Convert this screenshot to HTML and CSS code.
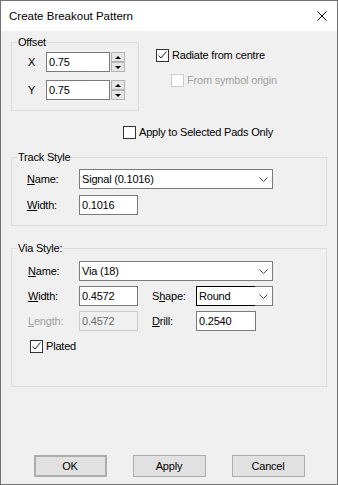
FILE: index.html
```html
<!DOCTYPE html>
<html>
<head>
    <title>Create Breakout Pattern</title>
    <link rel="stylesheet" href="styles.css">
</head>
<body>
<div class="window">
    <div class="titlebar">
        <span class="title">Create Breakout Pattern</span>
        <svg class="close" width="10" height="10" viewBox="0 0 10 10"><path d="M0.5 0.5L9.5 9.5M9.5 0.5L0.5 9.5" stroke="#000" stroke-width="1"/></svg>
    </div>
    <div class="content">
        <div class="top-row">
            <fieldset class="group offset">
                <legend>Offset</legend>
                <div class="group-body">
                    <div class="spin-row">
                        <span class="axis">X</span>
                        <span class="edit spin-edit">0.75</span>
                        <span class="spinner"><span class="spin-btn"><i class="tri-up"></i></span><span class="spin-btn"><i class="tri-down"></i></span></span>
                    </div>
                    <div class="spin-row second">
                        <span class="axis">Y</span>
                        <span class="edit spin-edit">0.75</span>
                        <span class="spinner"><span class="spin-btn"><i class="tri-up"></i></span><span class="spin-btn"><i class="tri-down"></i></span></span>
                    </div>
                </div>
            </fieldset>
            <div class="options">
                <div class="check">
                    <span class="box"><svg width="11" height="11" viewBox="0 0 11 11"><polyline points="1.5,5.5 4,8 9.5,1.5" fill="none" stroke="#222" stroke-width="1"/></svg></span>
                    <span>Radiate from centre</span>
                </div>
                <div class="check disabled sub">
                    <span class="box"></span>
                    <span>From symbol origin</span>
                </div>
            </div>
        </div>

        <div class="check apply">
            <span class="box"></span>
            <span>Apply to Selected Pads Only</span>
        </div>

        <fieldset class="group track">
            <legend>Track Style</legend>
            <div class="group-body">
                <div class="row">
                    <span class="lbl"><u>N</u>ame:</span>
                    <div class="combo wide">
                        <span class="combo-text">Signal (0.1016)</span>
                        <span class="combo-arrow"><svg width="9" height="5" viewBox="0 0 9 5"><polyline points="0.5,0.5 4.5,4.5 8.5,0.5" fill="none" stroke="#444" stroke-width="1"/></svg></span>
                    </div>
                </div>
                <div class="row next">
                    <span class="lbl"><u>W</u>idth:</span>
                    <span class="edit short">0.1016</span>
                </div>
            </div>
        </fieldset>

        <fieldset class="group via">
            <legend>Via Style:</legend>
            <div class="group-body">
                <div class="via-grid">
                    <span class="lbl"><u>N</u>ame:</span>
                    <div class="combo span4">
                        <span class="combo-text">Via (18)</span>
                        <span class="combo-arrow"><svg width="9" height="5" viewBox="0 0 9 5"><polyline points="0.5,0.5 4.5,4.5 8.5,0.5" fill="none" stroke="#444" stroke-width="1"/></svg></span>
                    </div>

                    <span class="lbl"><u>W</u>idth:</span>
                    <span class="edit">0.4572</span>
                    <span></span>
                    <span class="lbl">S<u>h</u>ape:</span>
                    <div class="combo focus">
                        <span class="combo-text">Round</span>
                        <span class="combo-arrow"><svg width="9" height="5" viewBox="0 0 9 5"><polyline points="0.5,0.5 4.5,4.5 8.5,0.5" fill="none" stroke="#444" stroke-width="1"/></svg></span>
                    </div>

                    <span class="lbl disabled-text"><u>L</u>ength:</span>
                    <span class="edit disabled-edit">0.4572</span>
                    <span></span>
                    <span class="lbl"><u>D</u>rill:</span>
                    <span class="edit drill">0.2540</span>
                </div>
                <div class="check plated">
                    <span class="box"><svg width="11" height="11" viewBox="0 0 11 11"><polyline points="1.5,5.5 4,8 9.5,1.5" fill="none" stroke="#222" stroke-width="1"/></svg></span>
                    <span>Plated</span>
                </div>
            </div>
        </fieldset>

        <div class="buttons">
            <button class="default">OK</button>
            <button>Apply</button>
            <button>Cancel</button>
        </div>
    </div>
</div>
</body>
</html>
```

FILE: styles.css
```css
body {
    margin: 0;
    font-family: "Liberation Sans", Arial, sans-serif;
    font-size: 11px;
    color: #000;
}
.window {
    width: 338px;
    height: 485px;
    box-sizing: border-box;
    border: 1px solid #727272;
    background-color: #f0f0f0;
    display: flex;
    flex-direction: column;
}
.titlebar {
    height: 30px;
    background-color: #fff;
    display: flex;
    align-items: center;
    justify-content: space-between;
    padding: 0 10px 0 8px;
}
.title {
    font-size: 11.5px;
}
.content {
    padding: 4px 10px 0 10px;
    letter-spacing: -0.2px;
}
.top-row {
    display: flex;
}
.group {
    margin: 0;
    padding: 0;
    border: 1px solid #dcdcdc;
    min-width: 0;
    box-sizing: border-box;
}
.group legend {
    margin-left: 5px;
    padding: 0 1px;
    height: 14px;
    line-height: 14px;
}
.offset {
    width: 128px;
}
.offset .group-body {
    padding: 3px 0 10px 16px;
}
.spin-row {
    display: flex;
    align-items: center;
    height: 20px;
}
.spin-row.second {
    margin-top: 8px;
}
.axis {
    width: 18px;
}
.edit {
    display: block;
    box-sizing: border-box;
    height: 20px;
    line-height: 18px;
    border: 1px solid #7a7a7a;
    background-color: #fff;
    padding-left: 2px;
    width: 59px;
}
.spin-edit {
    width: 64px;
}
.spinner {
    margin-left: 1px;
    width: 14px;
    height: 20px;
    display: flex;
    flex-direction: column;
    justify-content: space-between;
}
.spin-btn {
    height: 10px;
    box-sizing: border-box;
    border: 1px solid #b4b4b4;
    background-color: #e6e6e6;
    display: flex;
    align-items: center;
    justify-content: center;
}
.tri-up {
    border-left: 3px solid transparent;
    border-right: 3px solid transparent;
    border-bottom: 3px solid #000;
}
.tri-down {
    border-left: 3px solid transparent;
    border-right: 3px solid transparent;
    border-top: 3px solid #000;
}
.options {
    margin-left: 17px;
    margin-top: 14px;
}
.check {
    display: flex;
    align-items: center;
    height: 13px;
    line-height: 13px;
}
.box {
    width: 13px;
    height: 13px;
    box-sizing: border-box;
    border: 1px solid #333;
    background-color: #fff;
    margin-right: 3px;
    display: flex;
    align-items: center;
    justify-content: center;
}
.check.sub {
    margin-top: 12px;
    margin-left: 15px;
}
.check.disabled {
    color: #a0a0a0;
}
.check.disabled .box {
    border-color: #cccccc;
}
.check.apply {
    margin-top: 15px;
    margin-left: 112px;
}
.track {
    margin-top: 11px;
}
.track .group-body {
    padding: 5px 0 10px 15px;
}
.row {
    display: flex;
    align-items: center;
    height: 20px;
}
.row.next {
    margin-top: 6px;
}
.row .lbl {
    width: 52px;
}
.combo {
    display: flex;
    height: 20px;
}
.combo.wide {
    width: 194px;
}
.combo-text {
    flex: 1;
    box-sizing: border-box;
    border: 1px solid #7a7a7a;
    border-right: none;
    background-color: #fff;
    line-height: 18px;
    padding-left: 2px;
}
.combo-arrow {
    width: 18px;
    box-sizing: border-box;
    border: 1px solid #7a7a7a;
    border-left: none;
    background-color: #fff;
    display: flex;
    align-items: center;
    justify-content: center;
}
.combo.focus .combo-text {
    border-color: #000;
}
.via {
    margin-top: 15px;
}
.via .group-body {
    padding: 6px 0 33px 16px;
}
.via-grid {
    display: grid;
    grid-template-columns: 51px 59px 14px 44px 77px;
    grid-auto-rows: 20px;
    row-gap: 5px;
    align-items: center;
}
.span4 {
    grid-column: span 4;
}
.drill {
    width: 60px;
}
.disabled-text {
    color: #a0a0a0;
}
.disabled-edit {
    background-color: #f0f0f0;
    border-color: #cccccc;
    color: #6d6d6d;
}
.check.plated {
    margin-top: 9px;
    margin-left: 2px;
}
.buttons {
    margin-top: 68px;
    display: flex;
    justify-content: center;
    gap: 26px;
}
.buttons button {
    width: 73px;
    height: 22px;
    margin: 0;
    padding: 0;
    font-family: "Liberation Sans", Arial, sans-serif;
    font-size: 11px;
    letter-spacing: -0.2px;
    color: #000;
    background-color: #e1e1e1;
    border: 1px solid #adadad;
}
.buttons button.default {
    box-shadow: inset 0 0 0 1px #adadad;
}
```
